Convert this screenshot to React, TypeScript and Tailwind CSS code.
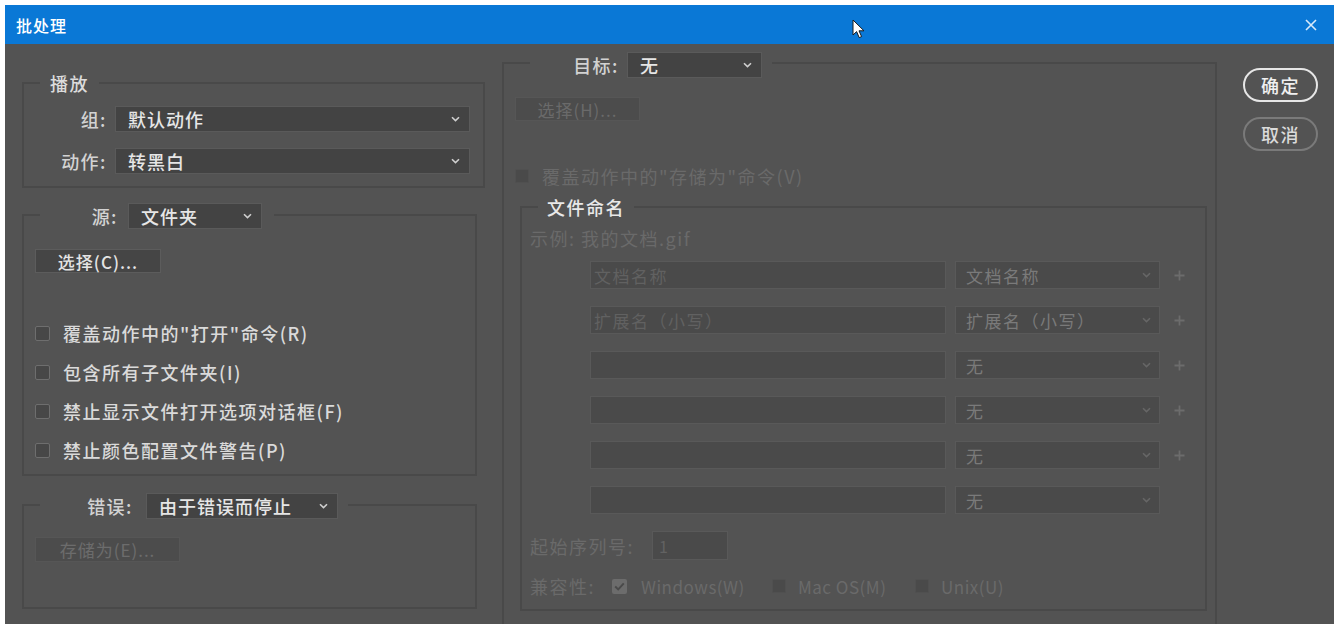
import React from "react";

const FONT = "font-['Noto_Sans_CJK_SC','Noto_Sans',sans-serif]";

function Chevron({ dim = false }: { dim?: boolean }) {
  return (
    <svg width="9" height="6" viewBox="0 0 9 6" className="shrink-0">
      <path
        d="M1 1.2 L4.5 4.6 L8 1.2"
        fill="none"
        stroke={dim ? "#666666" : "#cfcfcf"}
        strokeWidth="1.6"
      />
    </svg>
  );
}

function Dropdown({ label, className }: { label: string; className: string }) {
  return (
    <div
      className={`flex items-center justify-between h-[26px] bg-[#434343] border border-[#5a5a5a] pl-[12px] pr-[9px] ${className}`}
    >
      <span className="text-[18px] leading-none tracking-[1px] font-medium text-[#e6e6e6]">{label}</span>
      <Chevron />
    </div>
  );
}

function DimDropdown({ label }: { label: string }) {
  return (
    <div className="flex items-center justify-between w-[205px] h-[28px] bg-[#4a4a4a] border border-[#595959] pl-[10px] pr-[8px]">
      <span className="text-[17px] leading-none tracking-[1.5px] text-[#7a7a7a]">{label}</span>
      <Chevron dim />
    </div>
  );
}

function Plus() {
  return (
    <svg width="11" height="11" viewBox="0 0 11 11" className="shrink-0">
      <path d="M5.5 0.5 V10.5 M0.5 5.5 H10.5" stroke="#6c6c6c" strokeWidth="1.8" />
    </svg>
  );
}

function Box({ dim = false, checked = false }: { dim?: boolean; checked?: boolean }) {
  if (checked) {
    return (
      <span className="flex items-center justify-center w-[15px] h-[15px] rounded-[2px] bg-[#6c6c6c] shrink-0">
        <svg width="11" height="9" viewBox="0 0 11 9">
          <path d="M1.2 4.6 L4.2 7.4 L9.8 1.4" fill="none" stroke="#4a4a4a" strokeWidth="2" />
        </svg>
      </span>
    );
  }
  return dim ? (
    <span className="w-[14px] h-[14px] rounded-[2px] bg-[#4a4a4a] border border-[#505050] shrink-0" />
  ) : (
    <span className="w-[15px] h-[15px] rounded-[2px] bg-[#474747] border border-[#6e6e6e] shrink-0" />
  );
}

function CheckRow({ text, className }: { text: string; className: string }) {
  return (
    <div className={`flex items-center h-[22px] ml-[11px] ${className}`}>
      <Box />
      <span className="ml-[13px] text-[18px] leading-none tracking-[1.5px] font-medium text-[#dadada]">{text}</span>
    </div>
  );
}

function NameRow({ placeholder, value, plus, className }: { placeholder: string; value: string; plus: boolean; className: string }) {
  return (
    <div className={`flex items-center h-[28px] ml-[68px] ${className}`}>
      <div className="flex items-center w-[356px] h-[28px] bg-[#4a4a4a] border border-[#595959] pl-[3px]">
        <span className="text-[17px] leading-none tracking-[1.5px] text-[#616161]">{placeholder}</span>
      </div>
      <div className="ml-[9px]">
        <DimDropdown label={value} />
      </div>
      {plus && (
        <div className="ml-[14px]">
          <Plus />
        </div>
      )}
    </div>
  );
}

export default function App() {
  return (
    <div className={`w-[1338px] h-[624px] bg-white pl-[5px] pt-[5px] pr-[4px] overflow-hidden ${FONT}`}>
      <div className="h-full flex flex-col bg-[#535353]">
        {/* title bar */}
        <div className="relative h-[39px] shrink-0 bg-[#0a78d6] flex items-center justify-between pl-[11px] pr-[17px]">
          <span className="text-[16px] leading-none tracking-[1px] font-medium text-white">批处理</span>
          <svg width="12" height="12" viewBox="0 0 12 12">
            <path d="M1 1 L11 11 M11 1 L1 11" stroke="#d9eafa" strokeWidth="1.6" />
          </svg>
          <svg
            width="14"
            height="21"
            viewBox="0 0 14 21"
            className="absolute left-[847px] top-[14px]"
          >
            <path
              d="M1 1 L1 16 L4.6 12.6 L7.2 18.6 L9.6 17.6 L7 11.8 L12 11.8 Z"
              fill="#ffffff"
              stroke="#1a1a1a"
              strokeWidth="1"
              strokeLinejoin="round"
            />
          </svg>
        </div>

        {/* dialog body */}
        <div className="flex-1 flex items-start pl-[17px] pt-[4px] overflow-hidden">
          {/* left column */}
          <div className="mt-[23px] w-[463px] flex flex-col">
            <fieldset className="h-[117px] w-[463px] border-2 border-[#494949]">
              <legend className="ml-[16px] px-[10px] h-[24px] text-[18px] leading-[24px] tracking-[1.5px] font-medium text-[#dcdcdc]">播放</legend>
              <div className="mt-[11px] flex items-center">
                <span className="w-[83px] text-right text-[18px] leading-none tracking-[1.5px] font-medium text-[#d2d2d2]">组:</span>
                <Dropdown label="默认动作" className="ml-[8px] w-[355px]" />
              </div>
              <div className="mt-[16px] flex items-center">
                <span className="w-[83px] text-right text-[18px] leading-none tracking-[1.5px] font-medium text-[#d2d2d2]">动作:</span>
                <Dropdown label="转黑白" className="ml-[8px] w-[355px]" />
              </div>
            </fieldset>

            <fieldset className="mt-[12px] h-[276px] w-[455px] border-2 border-[#494949]">
              <legend className="ml-[16px] pr-[12px] pt-[3px]">
                <div className="flex items-center">
                  <span className="w-[78px] text-right text-[18px] leading-none tracking-[1.5px] font-medium text-[#d2d2d2]">源:</span>
                  <Dropdown label="文件夹" className="ml-[10px] w-[134px]" />
                </div>
              </legend>
              <div className="mt-[20px] ml-[11px] flex items-center justify-center w-[126px] h-[24px] bg-[#454545] border border-[#5c5c5c] text-[17px] leading-none tracking-[1px] font-medium text-[#e4e4e4]">
                选择(C)...
              </div>
              <CheckRow text={'覆盖动作中的"打开"命令(R)'} className="mt-[49px]" />
              <CheckRow text="包含所有子文件夹(I)" className="mt-[17px]" />
              <CheckRow text="禁止显示文件打开选项对话框(F)" className="mt-[17px]" />
              <CheckRow text="禁止颜色配置文件警告(P)" className="mt-[17px]" />
            </fieldset>

            <fieldset className="mt-[14px] h-[119px] w-[455px] border-2 border-[#494949]">
              <legend className="ml-[16px] pr-[10px] pt-[3px]">
                <div className="flex items-center">
                  <span className="w-[93px] text-right text-[18px] leading-none tracking-[1.5px] font-medium text-[#d2d2d2]">错误:</span>
                  <Dropdown label="由于错误而停止" className="ml-[13px] w-[192px]" />
                </div>
              </legend>
              <div className="mt-[18px] ml-[11px] flex items-center justify-center w-[145px] h-[25px] bg-[#4c4c4c] border border-[#565656] text-[17px] leading-none tracking-[1px] text-[#6c6c6c]">
                存储为(E)...
              </div>
            </fieldset>
          </div>

          {/* destination column */}
          <fieldset className="ml-[17px] w-[715px] h-[600px] shrink-0 border-2 border-[#494949]">
            <legend className="ml-[26px] pr-[10px] pt-[4px]">
              <div className="flex items-center">
                <span className="w-[89px] text-right text-[18px] leading-none tracking-[1.5px] font-medium text-[#d2d2d2]">目标:</span>
                <Dropdown label="无" className="ml-[8px] w-[135px]" />
              </div>
            </legend>
            <div className="mt-[19px] ml-[11px] flex items-center justify-center w-[125px] h-[24px] bg-[#4c4c4c] border border-[#565656] text-[17px] leading-none tracking-[1px] text-[#6a6a6a]">
              选择(H)...
            </div>
            <div className="mt-[45px] ml-[11px] h-[20px] flex items-center">
              <Box dim />
              <span className="ml-[13px] text-[18px] leading-none tracking-[1.5px] text-[#6a6a6a]">{'覆盖动作中的"存储为"命令(V)'}</span>
            </div>

            <fieldset className="mt-[9px] ml-[16px] mr-[8px] h-[416px] border-2 border-[#494949]">
              <legend className="ml-[16px] px-[9px] h-[24px] text-[18px] leading-[24px] tracking-[1.5px] font-medium text-[#e8e8e8]">文件命名</legend>
              <div className="mt-[9px] pl-[8px] h-[20px] flex items-center text-[18px] leading-none tracking-[1.5px] text-[#6a6a6a]">
                示例: 我的文档.gif
              </div>
              <NameRow placeholder="文档名称" value="文档名称" plus className="mt-[13px]" />
              <NameRow placeholder="扩展名（小写）" value="扩展名（小写）" plus className="mt-[17px]" />
              <NameRow placeholder="" value="无" plus className="mt-[17px]" />
              <NameRow placeholder="" value="无" plus className="mt-[17px]" />
              <NameRow placeholder="" value="无" plus className="mt-[17px]" />
              <NameRow placeholder="" value="无" plus={false} className="mt-[17px]" />

              <div className="mt-[17px] pl-[8px] h-[29px] flex items-center">
                <span className="w-[122px] text-[18px] leading-none tracking-[1.5px] text-[#6a6a6a]">起始序列号:</span>
                <div className="flex items-center w-[76px] h-[29px] bg-[#4a4a4a] border border-[#595959] pl-[6px] text-[16px] leading-none text-[#626262]">
                  1
                </div>
              </div>
              <div className="mt-[16px] pl-[8px] h-[20px] flex items-center text-[17px] leading-none tracking-[0.5px] text-[#6a6a6a]">
                <span className="w-[82px] text-[18px] tracking-[1.5px]">兼容性:</span>
                <div className="w-[160px] flex items-center">
                  <Box checked />
                  <span className="ml-[14px]">Windows(W)</span>
                </div>
                <div className="w-[143px] flex items-center">
                  <Box dim />
                  <span className="ml-[12px]">Mac OS(M)</span>
                </div>
                <div className="flex items-center">
                  <Box dim />
                  <span className="ml-[12px]">Unix(U)</span>
                </div>
              </div>
            </fieldset>
          </fieldset>

          {/* action buttons */}
          <div className="ml-[26px] mt-[20px] flex flex-col">
            <div className="flex items-center justify-center w-[75px] h-[34px] rounded-full border-2 border-[#e6e6e6] text-[18px] leading-none tracking-[1.5px] font-medium text-[#f0f0f0]">
              确定
            </div>
            <div className="mt-[15px] flex items-center justify-center w-[75px] h-[34px] rounded-full border-2 border-[#7a7a7a] text-[18px] leading-none tracking-[1.5px] font-medium text-[#dadada]">
              取消
            </div>
          </div>
        </div>
      </div>
    </div>
  );
}
